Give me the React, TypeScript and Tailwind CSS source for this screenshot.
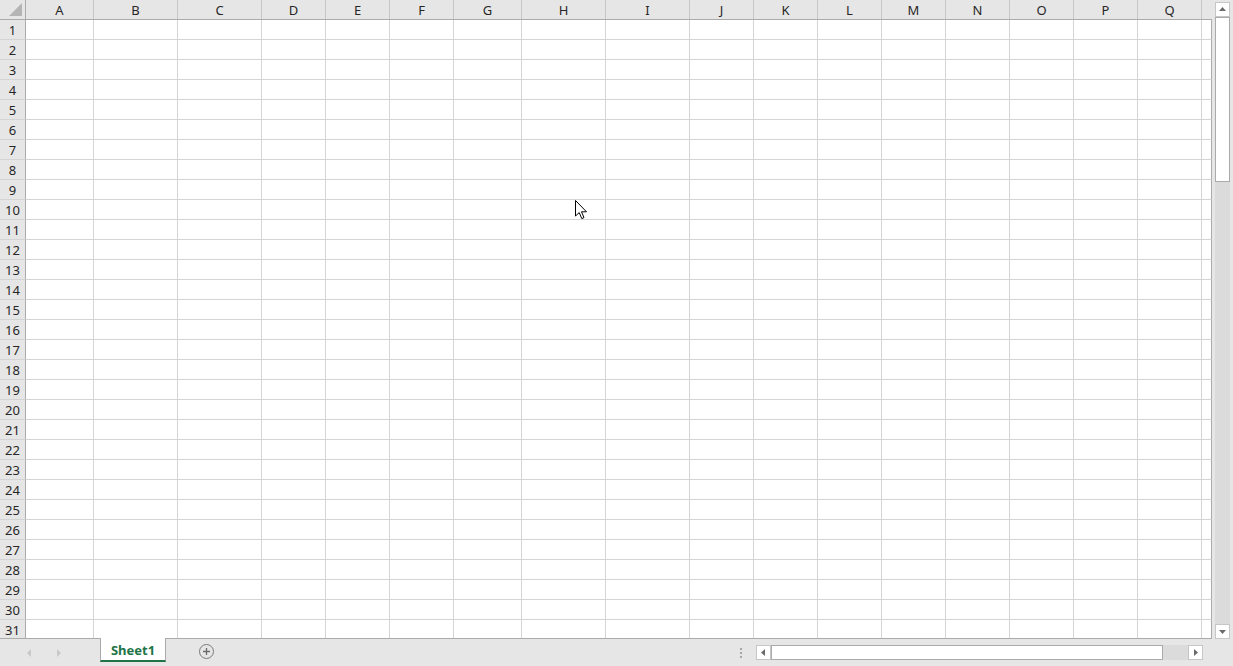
import React from 'react';

const columns: { label: string; w: string }[] = [
    { label: 'A', w: 'w-[68px]' },
    { label: 'B', w: 'w-[84px]' },
    { label: 'C', w: 'w-[84px]' },
    { label: 'D', w: 'w-[64px]' },
    { label: 'E', w: 'w-[64px]' },
    { label: 'F', w: 'w-[64px]' },
    { label: 'G', w: 'w-[68px]' },
    { label: 'H', w: 'w-[84px]' },
    { label: 'I', w: 'w-[84px]' },
    { label: 'J', w: 'w-[64px]' },
    { label: 'K', w: 'w-[64px]' },
    { label: 'L', w: 'w-[64px]' },
    { label: 'M', w: 'w-[64px]' },
    { label: 'N', w: 'w-[64px]' },
    { label: 'O', w: 'w-[64px]' },
    { label: 'P', w: 'w-[64px]' },
    { label: 'Q', w: 'w-[64px]' },
];

const rows = Array.from({ length: 31 }, (_, i) => i + 1);

const font = { fontFamily: '"Noto Sans", "Segoe UI", Arial, sans-serif' };

const Cursor = () => (
    <svg className="absolute left-[575px] top-[200px] pointer-events-none" width="13" height="20" viewBox="0 0 13 20">
        <path d="M0.5 0.5 L0.5 16 L4.2 12.6 L6.8 18.6 L9 17.6 L6.5 11.8 L11.5 11.8 Z" fill="#fff" stroke="#000" strokeWidth="1" strokeLinejoin="miter" />
    </svg>
);

const ScrollBtn = ({ dir }: { dir: 'up' | 'down' | 'left' | 'right' }) => {
    const pts = {
        up: '4,9 11,9 7.5,5',
        down: '4,6 11,6 7.5,10',
        left: '9,4 9,11 5,7.5',
        right: '6,4 6,11 10,7.5',
    }[dir];
    return (
        <div className="w-[15px] h-[15px] shrink-0 bg-white border border-[#c6c6c6] flex items-center justify-center">
            <svg width="15" height="15" viewBox="0 0 15 15" className="-m-px">
                <polygon points={pts} fill="#6b6b6b" />
            </svg>
        </div>
    );
};

export default function App() {
    return (
        <div className="relative w-[1233px] h-[666px] bg-[#e6e6e6] flex flex-col overflow-hidden select-none" style={font}>
            <div className="flex h-[639px]">
                {/* sheet grid */}
                <div className="w-[1212px] h-[639px] overflow-hidden border-b border-[#ababab] bg-white">
                    {/* column headers */}
                    <div className="flex h-[20px] bg-[#e6e6e6] border-b border-[#ababab]">
                        <div className="w-[26px] shrink-0 h-full border-r border-[#ababab] relative">
                            <svg className="absolute left-[9px] top-[3px]" width="13" height="13" viewBox="0 0 13 13">
                                <polygon points="0,13 13,13 13,0" fill="#b4b4b4" />
                            </svg>
                        </div>
                        {columns.map(c => (
                            <div key={c.label} className={`${c.w} shrink-0 h-full pt-px border-r border-[#c6c6c6] flex items-center justify-center text-[13px] text-[#262626] leading-none`}>
                                {c.label}
                            </div>
                        ))}
                        <div className="w-[10px] shrink-0 h-full" />
                    </div>
                    {/* rows */}
                    {rows.map(r => (
                        <div key={r} className="flex h-[20px]">
                            <div className="w-[26px] shrink-0 h-full pt-[2px] bg-[#e6e6e6] border-r border-b border-r-[#ababab] border-b-[#d4d4d4] flex items-center justify-center text-[13px] text-[#262626] leading-none">
                                {r}
                            </div>
                            {columns.map(c => (
                                <div key={c.label} className={`${c.w} shrink-0 h-full border-r border-b border-[#d4d4d4]`} />
                            ))}
                            <div className="w-[10px] shrink-0 h-full border-b border-r border-b-[#d4d4d4] border-r-[#ababab]" />
                        </div>
                    ))}
                </div>
                {/* vertical scrollbar */}
                <div className="w-[21px] h-full pl-[3px] pt-[2px] flex flex-col">
                    <ScrollBtn dir="up" />
                    <div className="w-[15px] h-[165px] shrink-0 bg-white border border-[#ababab]" />
                    <div className="w-[15px] flex-1 bg-[#dbdbdb]" />
                    <ScrollBtn dir="down" />
                </div>
            </div>

            {/* sheet tabs bar */}
            <div className="flex h-[27px] items-center">
                <div className="w-[100px] shrink-0 flex items-center pl-[27px] gap-[24px]">
                    <svg width="5" height="8" viewBox="0 0 5 8">
                        <polygon points="4,0 4,8 0,4" fill="#c8c8c8" />
                    </svg>
                    <svg width="5" height="8" viewBox="0 0 5 8">
                        <polygon points="1,0 1,8 5,4" fill="#c8c8c8" />
                    </svg>
                </div>
                <div className="w-[66px] shrink-0 self-start -mt-px h-[24px] pt-[3px] bg-white border-x border-[#ababab] border-b-2 border-b-[#217346] flex items-center justify-center text-[13px] font-bold text-[#217346] leading-none">
                    Sheet1
                </div>
                <div className="ml-[33px] w-[15px] h-[15px] rounded-full border border-[#7a7a7a] flex items-center justify-center -mt-[2px]">
                    <svg width="9" height="9" viewBox="0 0 9 9">
                        <path d="M4.5 1 V8 M1 4.5 H8" stroke="#6b6b6b" strokeWidth="1.3" />
                    </svg>
                </div>
                <div className="flex-1" />
                <div className="flex flex-col gap-[2px] mr-[14px]">
                    <div className="w-[2px] h-[2px] bg-[#a6a6a6]" />
                    <div className="w-[2px] h-[2px] bg-[#a6a6a6]" />
                    <div className="w-[2px] h-[2px] bg-[#a6a6a6]" />
                </div>
                <div className="w-[447px] h-[15px] flex mr-[30px]">
                    <ScrollBtn dir="left" />
                    <div className="w-[392px] h-[15px] bg-white border border-[#ababab]" />
                    <div className="flex-1 bg-[#dbdbdb]" />
                    <ScrollBtn dir="right" />
                </div>
            </div>

            <Cursor />
        </div>
    );
}
